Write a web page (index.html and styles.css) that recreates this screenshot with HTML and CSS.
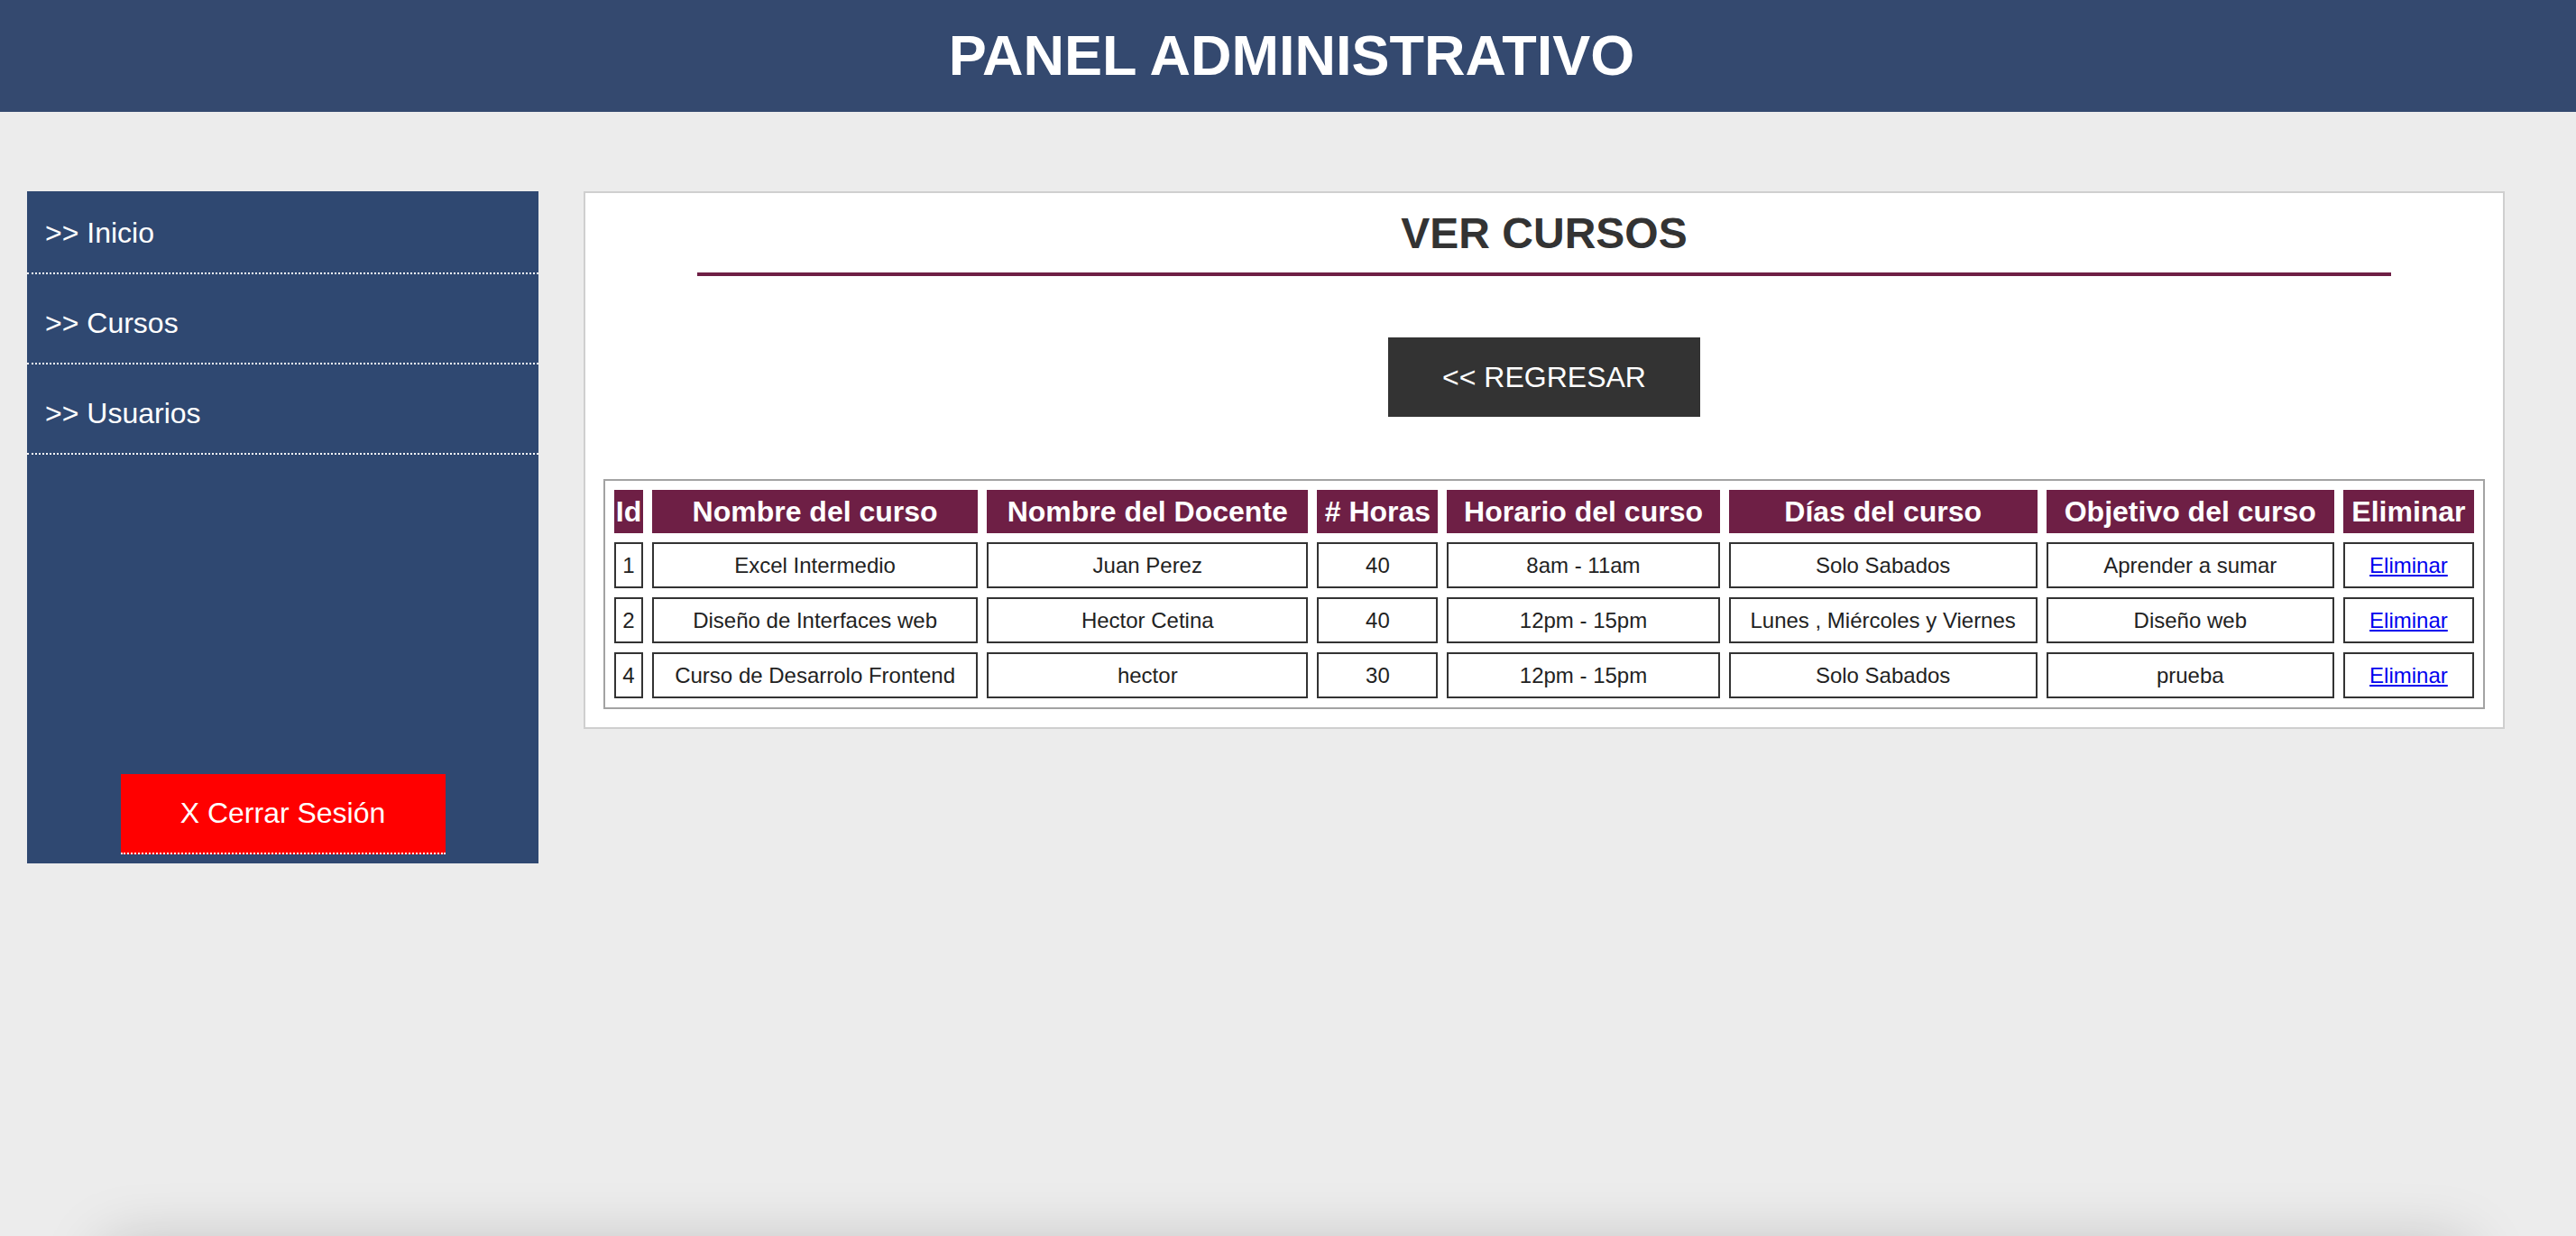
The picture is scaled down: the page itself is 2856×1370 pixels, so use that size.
FILE: index.html
```html
<!DOCTYPE html>
<html lang="es">
<head>
<meta charset="utf-8">
<title>Panel Administrativo</title>
<link rel="stylesheet" href="styles.css">
</head>
<body>
<div class="page">
  <header class="topbar">
    <h1 class="topbar-title">PANEL ADMINISTRATIVO</h1>
  </header>
  <div class="layout">
    <aside class="sidebar">
      <ul class="menu">
        <li class="menu-item"><a class="menu-link" href="#">&gt;&gt; Inicio</a></li>
        <li class="menu-item"><a class="menu-link" href="#">&gt;&gt; Cursos</a></li>
        <li class="menu-item"><a class="menu-link" href="#">&gt;&gt; Usuarios</a></li>
      </ul>
      <a class="logout" href="#">X Cerrar Sesión</a>
    </aside>
    <main class="card">
      <h2 class="card-title">VER CURSOS</h2>
      <div class="card-rule"></div>
      <a class="back-btn" href="#">&lt;&lt; REGRESAR</a>
      <table class="courses">
        <thead>
          <tr>
            <th class="c-id">Id</th>
            <th class="c-curso">Nombre del curso</th>
            <th class="c-docente">Nombre del Docente</th>
            <th class="c-horas"># Horas</th>
            <th class="c-horario">Horario del curso</th>
            <th class="c-dias">Días del curso</th>
            <th class="c-objetivo">Objetivo del curso</th>
            <th class="c-eliminar">Eliminar</th>
          </tr>
        </thead>
        <tbody>
          <tr>
            <td>1</td>
            <td>Excel Intermedio</td>
            <td>Juan Perez</td>
            <td>40</td>
            <td>8am - 11am</td>
            <td>Solo Sabados</td>
            <td>Aprender a sumar</td>
            <td><a class="del-link" href="#">Eliminar</a></td>
          </tr>
          <tr>
            <td>2</td>
            <td>Diseño de Interfaces web</td>
            <td>Hector Cetina</td>
            <td>40</td>
            <td>12pm - 15pm</td>
            <td>Lunes , Miércoles y Viernes</td>
            <td>Diseño web</td>
            <td><a class="del-link" href="#">Eliminar</a></td>
          </tr>
          <tr>
            <td>4</td>
            <td>Curso de Desarrolo Frontend</td>
            <td>hector</td>
            <td>30</td>
            <td>12pm - 15pm</td>
            <td>Solo Sabados</td>
            <td>prueba</td>
            <td><a class="del-link" href="#">Eliminar</a></td>
          </tr>
        </tbody>
      </table>
    </main>
  </div>
</div>
<footer class="footer"></footer>
</body>
</html>
```

FILE: styles.css
```css
html, body {
  margin: 0;
  padding: 0;
}

body {
  background: #ececec;
  font-family: "Liberation Sans", Arial, Helvetica, sans-serif;
  color: #333;
}

.page {
  min-height: 1382px;
}

/* ---------- top bar ---------- */
.topbar {
  background: #34496f;
  height: 124px;
}

.topbar-title {
  margin: 0;
  padding-left: 8px;
  text-align: center;
  color: #fff;
  font-size: 63px;
  font-weight: bold;
  line-height: 122px;
}

/* ---------- layout ---------- */
.layout {
  display: flex;
  align-items: flex-start;
  gap: 50px;
  padding: 88px 79px 0 30px;
}

/* ---------- sidebar ---------- */
.sidebar {
  width: 567px;
  height: 745px;
  flex: none;
  background: #2f4871;
  display: flex;
  flex-direction: column;
  align-items: center;
}

.menu {
  list-style: none;
  margin: 0;
  padding: 0;
  align-self: stretch;
}

.menu-item {
  padding: 36px 20px 25px;
  border-bottom: 2px dotted #fff;
}

.menu-item:first-child {
  padding-top: 28px;
}

.menu-link {
  display: block;
  color: #fff;
  text-decoration: none;
  font-size: 32px;
  line-height: 37px;
}

.logout {
  margin-top: auto;
  margin-bottom: 10px;
  width: 360px;
  height: 87px;
  background: #ff0000;
  border-bottom: 2px dotted #fff;
  color: #fff;
  text-decoration: none;
  font-size: 32px;
  line-height: 87px;
  text-align: center;
}

/* ---------- card ---------- */
.card {
  flex: 1;
  background: #fff;
  border: 2px solid #cfcfcf;
  padding: 0 20px 20px;
  display: flex;
  flex-direction: column;
  align-items: center;
}

.card-title {
  margin: 17px 0 0;
  font-size: 48px;
  line-height: 55px;
  font-weight: bold;
  color: #333;
}

.card-rule {
  width: 90%;
  height: 4px;
  margin-top: 16px;
  background: #6e1f45;
}

.back-btn {
  margin-top: 68px;
  width: 346px;
  height: 88px;
  background: #333;
  color: #fff;
  text-decoration: none;
  font-size: 32px;
  line-height: 88px;
  text-align: center;
}

/* ---------- table ---------- */
.courses {
  margin-top: 69px;
  width: 100%;
  table-layout: fixed;
  border: 2px solid #a3a3a3;
  border-spacing: 10px;
}

.courses th {
  box-sizing: border-box;
  background: #6e1f45;
  color: #fff;
  font-size: 32px;
  font-weight: bold;
  line-height: 37px;
  padding: 6px 1px 5px;
  white-space: nowrap;
}

.courses td {
  border: 2px solid #333;
  padding: 10px 2px;
  font-size: 24px;
  line-height: 27px;
  text-align: center;
  color: #222;
  white-space: nowrap;
}

.c-id { width: 32px; }
.c-curso { width: 361px; }
.c-docente { width: 356px; }
.c-horas { width: 134px; }
.c-horario { width: 302px; }
.c-dias { width: 342px; }
.c-objetivo { width: 319px; }
.c-eliminar { width: 145px; }

.del-link {
  color: #0000ee;
  text-decoration: underline;
}

/* ---------- footer shadow ---------- */
.footer {
  height: 80px;
  margin: 0 122px 0 118px;
  background: #ececec;
  box-shadow: 0 0 70px rgba(0, 0, 0, 0.22);
}
```
